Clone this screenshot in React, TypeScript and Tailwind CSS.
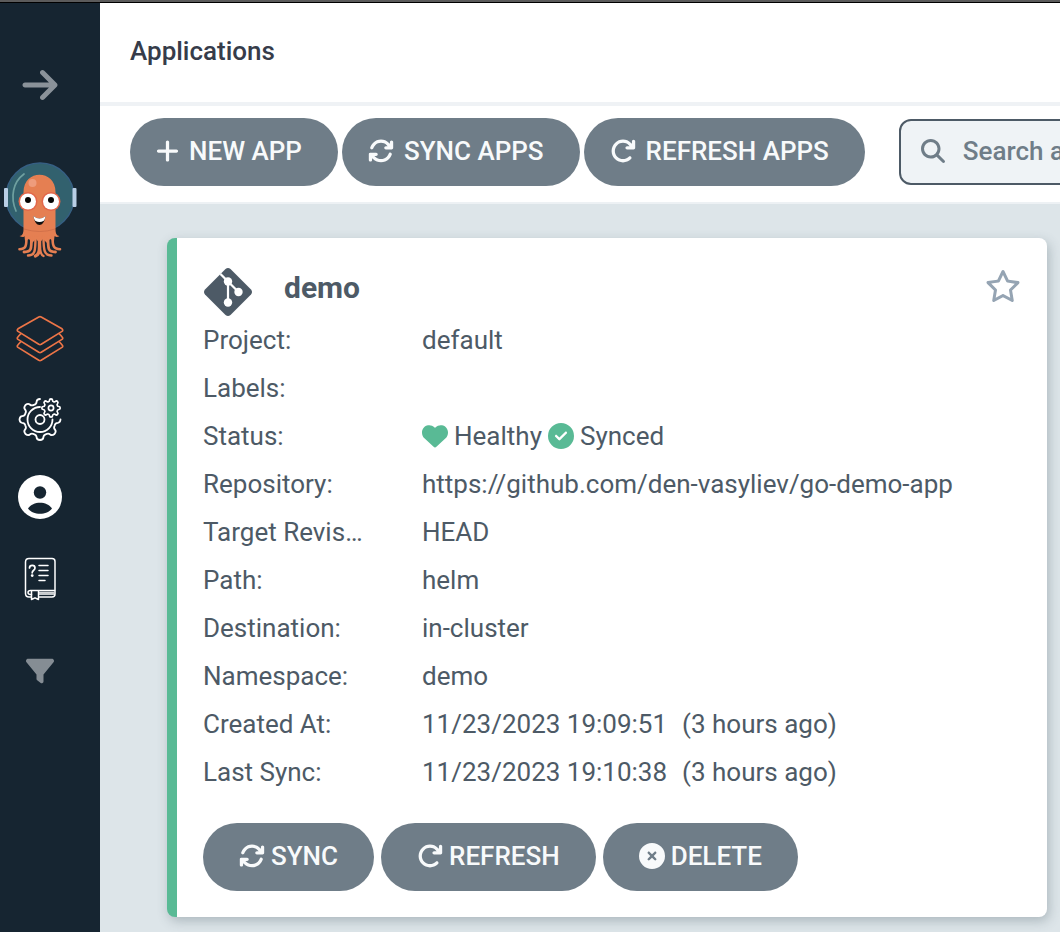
import type { ReactNode } from 'react';
import {
  FaArrowRight,
  FaArrowRotateRight,
  FaArrowsRotate,
  FaCircleCheck,
  FaCircleXmark,
  FaFilter,
  FaHeart,
  FaMagnifyingGlass,
  FaPlus,
  FaRegStar,
} from 'react-icons/fa6';

function gearPath(
  cx: number,
  cy: number,
  outer: number,
  inner: number,
  teeth: number,
  startDeg: number,
  count: number,
) {
  const step = 360 / teeth;
  const at = (deg: number, r: number) => {
    const a = (deg * Math.PI) / 180;
    return `${(cx + r * Math.cos(a)).toFixed(2)} ${(cy + r * Math.sin(a)).toFixed(2)}`;
  };
  let d = `M${at(startDeg, outer)}`;
  for (let i = 0; i < count; i++) {
    const s = startDeg + i * step;
    d += ` Q${at(s + step * 0.2, outer)} ${at(s + step * 0.24, (outer + inner) / 2)}`;
    d += ` Q${at(s + step * 0.28, inner)} ${at(s + step * 0.5, inner)}`;
    d += ` Q${at(s + step * 0.72, inner)} ${at(s + step * 0.76, (outer + inner) / 2)}`;
    d += ` Q${at(s + step * 0.8, outer)} ${at(s + step, outer)}`;
  }
  return d;
}

function ArgoLogo() {
  return (
    <svg viewBox="0 0 80 98" className="h-[98px] w-20" aria-hidden="true">
      <circle cx="40" cy="36" r="34" fill="#32616e" stroke="#365f83" strokeWidth="1.4" />
      <path d="M24 13C13 21 10 36 16 50" fill="none" stroke="#6fa0a0" strokeWidth="1.7" strokeLinecap="round" />
      <rect x="4" y="27" width="4" height="19" rx="1" fill="#b9cfe6" />
      <rect x="72.5" y="27" width="4" height="19" rx="1" fill="#b9cfe6" />
      <path
        d="M23.5 31C23.5 8 55.5 8 55.5 31V68C55.5 72 56.5 75 59.5 75C57.5 76.500 55 76 54.500 75L54 80L50 78L47 82L43 78L39.500 82L36 78L32 82L29 78L25 80L24.500 75C24 76.500 21.500 76 19.500 75C22.500 75 23.500 72 23.500 68Z"
        fill="#e57f52"
      />
      <g fill="none" stroke="#e57f52" strokeWidth="2.6" strokeLinecap="round">
        <path d="M26.5 76C26.5 85 26 88 19.500 88.300" />
        <path d="M31.500 76C31.500 88 31.500 91 24 91" strokeWidth="2.8" />
        <path d="M35.500 76C35.500 90 35 94.500 28 94.500" strokeWidth="2.4" />
        <path d="M39.500 76V86C39.500 91 38.500 94 35.500 95" strokeWidth="3.4" />
        <path d="M39.800 84C40 91 41 94 43.500 95" strokeWidth="2.4" />
        <path d="M43.500 76C43.500 90 44.500 94.500 51.500 94.500" strokeWidth="2.4" />
        <path d="M48 76C48 88 48 91 55.500 91" strokeWidth="2.8" />
        <path d="M52.500 76C52.500 85 53.500 88 60 88.300" />
      </g>
      <path d="M24 68Q40 73 55 68" fill="none" stroke="#cc6c48" strokeWidth="0.8" />
      <circle cx="32.5" cy="22" r="4" fill="#ee9c7c" />
      <circle cx="28" cy="40.5" r="9.5" fill="#e2664a" />
      <circle cx="51" cy="40.5" r="9.5" fill="#e2664a" />
      <circle cx="28" cy="40.5" r="8" fill="#fff" />
      <circle cx="51" cy="40.5" r="8" fill="#fff" />
      <circle cx="28" cy="39" r="3" fill="#050505" />
      <circle cx="51" cy="39" r="3" fill="#050505" />
      <path d="M33.500 55C35 67 44 67 45.500 55Q39.500 60 33.500 55Z" fill="#111" />
      <path d="M33.500 55C34 58 34.500 59 35.500 60Q39.500 62 43.500 60C44.500 59 45 58 45.500 55Q39.500 60 33.500 55Z" fill="#fff" />
    </svg>
  );
}

function LayersIcon() {
  return (
    <svg viewBox="0 0 48 48" className="size-12" fill="none" stroke="#ed7547" strokeWidth="1.7" strokeLinejoin="round" aria-hidden="true">
      <path d="M22.800 2L2 13.800Q0.500 15.200 2 16.400L22.800 29.200Q24 29.900 25.200 29.200L46 16.400Q47.500 15.200 46 13.800L25.200 2Q24 1.300 22.800 2Z" />
      <path d="M5 18.500L2 21.800Q0.500 23.200 2 24.400L22.800 37.200Q24 37.900 25.200 37.200L46 24.400Q47.500 23.200 46 21.800L43 18.500" />
      <path d="M5 26.500L2 29.800Q0.500 31.200 2 32.400L22.800 45.200Q24 45.900 25.200 45.200L46 32.400Q47.500 31.200 46 29.800L43 26.500" />
    </svg>
  );
}

function GearsIcon() {
  return (
    <svg viewBox="0 0 44 44" className="size-11" fill="none" stroke="#fff" strokeWidth="1.8" strokeLinecap="round" aria-hidden="true">
      <path d={gearPath(22, 22.5, 20.5, 15.8, 8, 0, 6)} />
      <path d="M22 10A12.500 12.500 0 1 0 34.500 22.500" />
      <circle cx="22" cy="22.5" r="4.5" />
      <path d={gearPath(33, 11, 9.2, 6.8, 8, 0, 8)} strokeWidth="1.7" />
      <circle cx="33" cy="11" r="2.6" strokeWidth="1.7" />
    </svg>
  );
}

function UserIcon() {
  return (
    <svg viewBox="0 0 44 44" className="size-11" aria-hidden="true">
      <circle cx="22" cy="22" r="22" fill="#fff" />
      <circle cx="22" cy="17.5" r="6.2" fill="#162531" />
      <path d="M10 33.500C15 25.800 29 25.800 34 33.500C29 40.600 15 40.600 10 33.500Z" fill="#162531" />
    </svg>
  );
}

function BookIcon() {
  return (
    <svg viewBox="0 0 32 44" className="h-11 w-8" fill="none" stroke="#fff" strokeWidth="1.5" strokeLinecap="round" strokeLinejoin="round" aria-hidden="true">
      <path d="M7 40H5Q1.500 40 1.500 36.500V5Q1.500 1.500 5 1.500H28Q31 1.500 31 4.500V37Q31 40 28 40H15" />
      <path d="M30.500 33.500H6.500Q4 33.500 4 35.500Q4 37.500 6.500 37.500H7.500M15 37H30" />
      <path d="M15 35.300H30" strokeWidth="1" />
      <path d="M7.500 34V42.500L11 40.800L14.500 42.500V34" />
      <path d="M5.500 11C5.500 7.500 11 7.500 11 11C11 13.500 8.200 13 8.200 15.800" strokeWidth="1.7" />
      <circle cx="8.2" cy="18.6" r="0.7" fill="#fff" />
      <path d="M15 8.500H24M15 13.500H24M15 18.500H24M15 23.500H21" />
    </svg>
  );
}

function GitIcon() {
  return (
    <svg viewBox="0 0 48 48" className="size-12" aria-hidden="true">
      <path
        d="M21.500 1Q24 -1 26.500 1L47 21.500Q49 24 47 26.500L26.500 47Q24 49 21.500 47L1 26.500Q-1 24 1 21.500Z"
        fill="#4d5a66"
      />
      <g fill="none" stroke="#fff" strokeWidth="2.2">
        <path d="M16.500 6L24 13.500V34.500M24 13.500L34.500 24" />
      </g>
      <g fill="#fff">
        <circle cx="24" cy="13.5" r="4.2" />
        <circle cx="34.5" cy="24" r="4.2" />
        <circle cx="24" cy="34.5" r="4.2" />
      </g>
    </svg>
  );
}

const pill =
  'flex h-[68px] shrink-0 items-center whitespace-nowrap rounded-full bg-[#6f7d88] pb-0.5 text-[26px] font-medium text-[#f8fafb]';

function ToolbarButton({ icon, children }: { icon: ReactNode; children: ReactNode }) {
  return (
    <button type="button" className={`${pill} gap-2.5 pr-9 pl-[26px]`}>
      {icon}
      {children}
    </button>
  );
}

function CardButton({ icon, children }: { icon: ReactNode; children: ReactNode }) {
  return (
    <button type="button" className={`${pill} gap-1.5 px-9`}>
      {icon}
      {children}
    </button>
  );
}

const details: { label: string; value: ReactNode }[] = [
  { label: 'Project:', value: 'default' },
  { label: 'Labels:', value: '' },
  {
    label: 'Status:',
    value: (
      <span className="flex items-center gap-1.5">
        <FaHeart className="size-[26px] fill-[#59ba95]" />
        Healthy
        <FaCircleCheck className="size-[26px] fill-[#59ba95]" />
        Synced
      </span>
    ),
  },
  { label: 'Repository:', value: 'https://github.com/den-vasyliev/go-demo-app' },
  { label: 'Target Revision:', value: 'HEAD' },
  { label: 'Path:', value: 'helm' },
  { label: 'Destination:', value: 'in-cluster' },
  { label: 'Namespace:', value: 'demo' },
  {
    label: 'Created At:',
    value: (
      <span className="flex gap-[15px]">
        <span>11/23/2023 19:09:51</span>
        <span>(3 hours ago)</span>
      </span>
    ),
  },
  {
    label: 'Last Sync:',
    value: (
      <span className="flex gap-[15px]">
        <span>11/23/2023 19:10:38</span>
        <span>(3 hours ago)</span>
      </span>
    ),
  },
];

function Sidebar() {
  return (
    <nav aria-label="Main" className="flex w-[100px] shrink-0 flex-col items-start bg-[#162531] pt-[62px]">
      <div className="flex w-20 flex-col items-center">
        <button type="button" aria-label="Expand sidebar">
          <FaArrowRight className="size-10 text-[#8a9299]" />
        </button>
        <a href="#home" aria-label="Argo" className="mt-14 block">
          <ArgoLogo />
        </a>
        <a href="#applications" aria-label="Applications" className="mt-14 block">
          <LayersIcon />
        </a>
        <a href="#settings" aria-label="Settings" className="mt-[34px] block">
          <GearsIcon />
        </a>
        <a href="#user" aria-label="User info" className="mt-[34px] block">
          <UserIcon />
        </a>
        <a href="#docs" aria-label="Documentation" className="mt-[38px] block">
          <BookIcon />
        </a>
        <button type="button" aria-label="Filters" className="mt-14">
          <FaFilter className="size-7 text-[#858d94]" />
        </button>
      </div>
    </nav>
  );
}

function AppCard() {
  return (
    <article className="rounded-lg border-l-[10px] border-[#59ba95] bg-white px-[26px] pt-[26px] pb-[26px] shadow-[2px_4px_12px_rgba(60,80,90,0.3)]">
      <header className="flex h-[52px] items-center">
        <span className="pt-1 pl-px">
          <GitIcon />
        </span>
        <h2 className="ml-8 flex-1 pb-1 text-[30px] leading-9 font-bold">demo</h2>
        <button type="button" aria-label="Add to favorites" className="pb-2">
          <FaRegStar className="size-9 text-[#95a4b3]" />
        </button>
      </header>
      <dl>
        {details.map(({ label, value }) => (
          <div key={label} className="flex h-12 items-center">
            <dt className="mr-[55px] w-[164px] shrink-0 truncate">{label}</dt>
            <dd className="whitespace-nowrap">{value}</dd>
          </div>
        ))}
      </dl>
      <footer className="mt-[27px] flex gap-[7px]">
        <CardButton icon={<FaArrowsRotate className="size-[26px]" />}>SYNC</CardButton>
        <CardButton icon={<FaArrowRotateRight className="size-[26px]" />}>REFRESH</CardButton>
        <CardButton icon={<FaCircleXmark className="size-[26px]" />}>DELETE</CardButton>
      </footer>
    </article>
  );
}

export default function App() {
  return (
    <div className="flex min-h-screen flex-col overflow-hidden bg-[#dde5e9] font-[Roboto,'Liberation_Sans',sans-serif] text-[26px] leading-8 text-[#4d5a66]">
      <div className="h-[3px] border-b border-black bg-[#5b5b5b]" />
      <div className="flex flex-1">
        <Sidebar />
        <div className="min-w-0 flex-1">
          <header className="border-b-4 border-[#eff2f5] bg-white px-[30px] pt-8 pb-[35px]">
            <h1 className="leading-8 font-medium text-[#363c4a]">Applications</h1>
          </header>
          <div className="flex items-center gap-1 overflow-hidden border-b-2 border-[#edf1f4] bg-white pt-3 pb-4 pl-[30px]">
            <ToolbarButton icon={<FaPlus className="h-[26px] w-[23px]" />}>NEW APP</ToolbarButton>
            <ToolbarButton icon={<FaArrowsRotate className="size-[26px]" />}>SYNC APPS</ToolbarButton>
            <ToolbarButton icon={<FaArrowRotateRight className="size-[26px]" />}>REFRESH APPS</ToolbarButton>
            <label className="ml-[30px] flex h-[66px] min-w-[500px] flex-1 items-center rounded-xl border-2 border-[#4d5a66] bg-[#eff3f6] pb-0.5 pl-5">
              <FaMagnifyingGlass className="size-6 shrink-0 text-[#6f7d88]" />
              <input
                type="text"
                aria-label="Search applications"
                placeholder="Search applications..."
                className="ml-[18px] min-w-0 flex-1 bg-transparent font-medium outline-none placeholder:text-[#6f7d88]"
              />
            </label>
          </div>
          <main className="pt-[34px] pr-[13px] pb-[15px] pl-[67px]">
            <AppCard />
          </main>
        </div>
      </div>
    </div>
  );
}
